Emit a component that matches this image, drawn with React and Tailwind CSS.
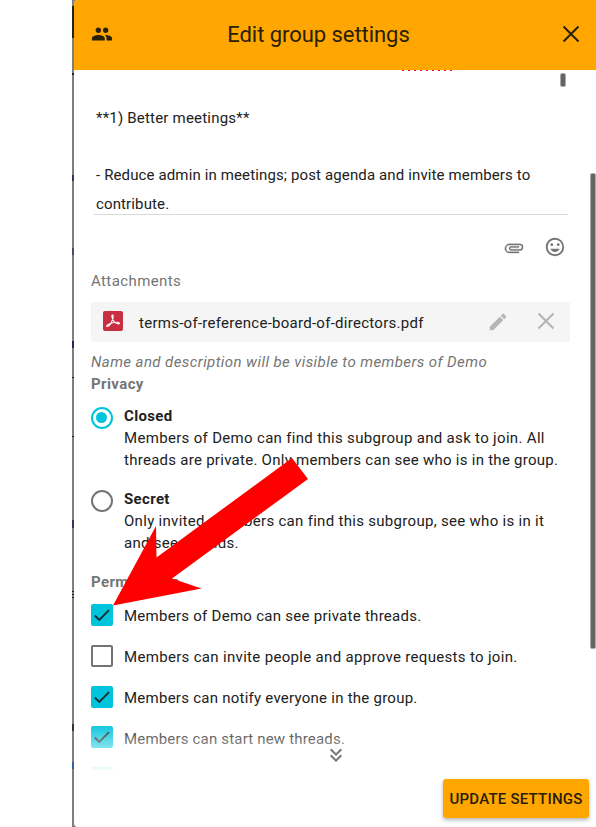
const ICONS = {
  people: "M16 11c1.66 0 2.99-1.34 2.99-3S17.66 5 16 5c-1.66 0-3 1.34-3 3s1.34 3 3 3zm-8 0c1.66 0 2.99-1.34 2.99-3S9.66 5 8 5C6.34 5 5 6.34 5 8s1.34 3 3 3zm0 2c-2.33 0-7 1.17-7 3.5V19h14v-2.5c0-2.33-4.67-3.5-7-3.5zm8 0c-.29 0-.62.02-.97.05 1.16.84 1.97 1.97 1.97 3.45V19h6v-2.5c0-2.33-4.67-3.5-7-3.5z",
  clip: "M16.5,6V17.5A4,4 0 0,1 12.5,21.5A4,4 0 0,1 8.5,17.5V5A2.5,2.5 0 0,1 11,2.5A2.5,2.5 0 0,1 13.5,5V15.5A1,1 0 0,1 12.5,16.5A1,1 0 0,1 11.5,15.5V6H10V15.5A2.5,2.5 0 0,0 12.5,18A2.5,2.5 0 0,0 15,15.5V5A4,4 0 0,0 11,1A4,4 0 0,0 7,5V17.5A5.5,5.5 0 0,0 12.5,23A5.5,5.5 0 0,0 18,17.5V6H16.5Z",
  smile: "M12,17.5C14.33,17.5 16.3,16.04 17.11,14H6.89C7.69,16.04 9.67,17.5 12,17.5M8.5,11A1.5,1.5 0 0,0 10,9.5A1.5,1.5 0 0,0 8.5,8A1.5,1.5 0 0,0 7,9.5A1.5,1.5 0 0,0 8.5,11M15.5,11A1.5,1.5 0 0,0 17,9.5A1.5,1.5 0 0,0 15.5,8A1.5,1.5 0 0,0 14,9.5A1.5,1.5 0 0,0 15.5,11M12,20A8,8 0 0,1 4,12A8,8 0 0,1 12,4A8,8 0 0,1 20,12A8,8 0 0,1 12,20M12,2C6.47,2 2,6.5 2,12A10,10 0 0,0 12,22A10,10 0 0,0 22,12A10,10 0 0,0 12,2Z",
  pencil: "M20.71,7.04C21.1,6.65 21.1,6 20.71,5.63L18.37,3.29C18,2.9 17.35,2.9 16.96,3.29L15.12,5.12L18.87,8.87M3,17.25V21H6.75L17.81,9.93L14.06,6.18L3,17.25Z",
  down: "M16.59,5.59L18,7L12,13L6,7L7.41,5.59L12,10.17L16.59,5.59M16.59,11.59L18,13L12,19L6,13L7.41,11.59L12,16.17L16.59,11.59Z",
};

function Icon({ name, className }) {
  return (
    <svg viewBox="0 0 24 24" fill="currentColor" className={className}>
      <path d={ICONS[name]} />
    </svg>
  );
}

function Cross({ className }) {
  return (
    <svg viewBox="0 0 24 24" fill="none" stroke="currentColor" strokeWidth="2" className={className}>
      <path d="M4.500 4.500 19.500 19.500M19.500 4.500 4.500 19.500" />
    </svg>
  );
}

function Check({ checked, label, raised, tracking = "tracking-[0.27px]" }) {
  return (
    <div className="flex h-[41px] items-start">
      <span
        className={
          "flex h-[22px] w-[22px] shrink-0 items-center justify-center rounded-[2px] " +
          (checked ? "bg-[#00c4dc] " : "border-2 border-[#757575] ") +
          (raised ? "-mt-px" : "")
        }
      >
        {checked && (
          <svg viewBox="0 0 22 22" className="h-[22px] w-[22px]" fill="none" stroke="#17302f" strokeWidth="1.9">
            <path d="M3.8 11.500 8.300 16 18 6.200" />
          </svg>
        )}
      </span>
      <span className={"ml-[11px] mt-px leading-[22px] " + tracking}>{label}</span>
    </div>
  );
}

function Radio({ selected, title, children }) {
  return (
    <div className="flex h-[83px] shrink-0 items-start">
      <span
        className={
          "mt-[2px] flex h-[22px] w-[22px] shrink-0 items-center justify-center rounded-full border-2 " +
          (selected ? "border-[#00c4dc]" : "border-[#757575]")
        }
      >
        {selected && <span className="mb-px mr-px h-[11px] w-[11px] rounded-full bg-[#00c4dc]" />}
      </span>
      <div className="ml-[11px] leading-[22px]">
        <div className="font-bold tracking-[0.35px]">{title}</div>
        {children}
      </div>
    </div>
  );
}

export default function App() {
  return (
    <div className="relative flex h-[827px] w-[596px] overflow-hidden whitespace-nowrap bg-white pl-[72px] font-['Roboto',sans-serif] text-[15px] text-[#212121]">
      <div className="relative flex w-[524px] bg-[#7f7f7f] pl-[2px]">
        <span className="absolute left-0 top-[6px] h-8 w-[2px] bg-[#222]" />
        <span className="absolute left-0 top-[73px] h-[2px] w-[2px] bg-[#222]" />
        <span className="absolute left-0 top-[175px] h-[6px] w-[2px] bg-[#34345f]" />
        <span className="absolute left-0 top-[248px] h-[7px] w-[2px] bg-[#4b4b60]" />
        <span className="absolute left-0 top-[341px] h-[7px] w-[2px] bg-[#26264f]" />
        <span className="absolute left-0 top-[377px] h-px w-[2px] bg-[#222]" />
        <span className="absolute left-0 top-[436px] h-px w-[2px] bg-[#222]" />
        <span className="absolute left-0 top-[520px] h-[8px] w-[2px] bg-[#34345f]" />
        <span className="absolute left-0 top-[591px] h-[8px] w-[2px] bg-[repeating-linear-gradient(180deg,#222_0_1px,#7f7f7f_1px_3px)]" />
        <span className="absolute left-0 top-[724px] h-[7px] w-[2px] bg-[#35304a]" />
        <span className="absolute left-0 top-[762px] h-[7px] w-[2px] bg-[#30619b]" />
        <main className="relative flex w-[522px] flex-col overflow-hidden rounded-l bg-white">
          <header className="flex h-[70px] shrink-0 items-center bg-[#ffa700] pl-[17px] pr-[13px] text-[#282009]">
            <Icon name="people" className="-mt-[2px] mr-px h-[22px] w-[22px]" />
            <h1 className="mr-9 flex-1 text-center text-[22px] leading-[70px] tracking-[-0.05px]">Edit group settings</h1>
            <Cross className="-mt-[2px] h-6 w-6" />
          </header>

          <div className="flex h-[700px] shrink-0 flex-col overflow-hidden pl-[17px] pr-[26px]">
            <section className="relative ml-[3px] mr-[2px] h-[145px] shrink-0 overflow-hidden border-b border-[#d9d9d9] pl-[2px] pt-[34px] leading-[28px] tracking-[0.13px]">
              <span className="absolute left-[308px] top-0 h-px w-[51px] bg-[repeating-linear-gradient(90deg,#f00_0_2px,transparent_2px_6px)]" />
              <span className="absolute right-[2px] top-[3px] h-[14px] w-[6px] rounded-[2px] border border-[#aaa9a8] bg-[#666461]" />
              <div className="tracking-[0.2px]">**1) Better meetings**</div>
              <div className="h-[29px]">&nbsp;</div>
              <div className="h-[29px]">- Reduce admin in meetings; post agenda and invite members to</div>
              <div>contribute.</div>
            </section>
            <div className="flex h-[55px] shrink-0 justify-end gap-[20px] pr-[4px] pt-[21px] text-[#757575]">
              <Icon name="clip" className="mt-[2px] h-5 w-5 rotate-90 stroke-current stroke-[0.4px]" />
              <Icon name="smile" className="h-[22px] w-[22px]" />
            </div>
            <div className="h-8 shrink-0 leading-[22px] tracking-[0.4px] text-[#757575]">Attachments</div>
            <div className="flex h-10 shrink-0 items-center rounded-[2px] bg-[#f5f5f5] pl-3 pr-[12px]">
              <svg viewBox="0 0 20 20" className="-mt-[2px] h-5 w-5" fill="none">
                <rect width="20" height="20" rx="2" fill="#c92f42" />
                <path d="M4 15.5C7 15.5 10.5 8 10.2 5.2 10 3.2 8.3 3.8 9 6.2 10 10 12.8 12.8 15.5 12.9 17.5 12.9 16.5 11.3 14 11.3 10.5 11.3 3.8 13.2 3.7 15.2Z" stroke="white" strokeWidth="1.1" />
              </svg>
              <span className="ml-4 mt-[2px] flex-1 tracking-[0.27px]">terms-of-reference-board-of-directors.pdf</span>
              <Icon name="pencil" className="mr-[25px] h-[22px] w-[22px] text-[#b5b5b5]" />
              <Cross className="-mt-[2px] h-6 w-6 text-[#b5b5b5]" />
            </div>
            <div className="mt-[9px] shrink-0 italic leading-[22px] tracking-[0.42px] text-[#757575]">
              Name and description will be visible to members of Demo
            </div>
            <div className="mb-[10px] shrink-0 font-bold leading-[22px] tracking-[0.4px] text-[#757575]">Privacy</div>
            <Radio selected title="Closed">
              <div className="tracking-[0.32px]">Members of Demo can find this subgroup and ask to join. All</div>
              <div className="tracking-[0.27px]">threads are private. Only members can see who is in the group.</div>
            </Radio>
            <Radio title="Secret">
              <div className="tracking-[0.3px]">Only invited members can find this subgroup, see who is in it</div>
              <div className="tracking-[0.27px]">and see threads.</div>
            </Radio>
            <div className="mb-[11px] shrink-0 font-bold leading-[22px] tracking-[0.4px] text-[#757575]">Permissions</div>
            <div className="shrink-0">
              <Check checked label="Members of Demo can see private threads." />
              <Check label="Members can invite people and approve requests to join." tracking="tracking-[0.32px]" />
              <Check checked label="Members can notify everyone in the group." tracking="tracking-[0.25px]" />
              <Check checked raised label="Members can start new threads." tracking="tracking-[0.18px]" />
              <Check checked raised label="" />
            </div>
          </div>

          <footer className="flex flex-1 items-start justify-end pr-[7px] pt-[9px]">
            <button className="h-[39px] w-[146px] rounded-[3px] bg-[#ffa700] pt-px text-[15px] font-medium tracking-[0.23px] text-[#282009] shadow-[0_2px_4px_rgba(0,0,0,0.3)]">
              UPDATE SETTINGS
            </button>
          </footer>

          <div className="absolute left-0 top-[722px] flex h-[50px] w-full items-end justify-center bg-linear-to-b from-white/0 to-white pb-[5px] pl-[2px]">
            <Icon name="down" className="h-6 w-6 text-[#757575]" />
          </div>
          <span className="absolute right-0 top-[173px] h-[476px] w-[6px] rounded-[2px] border border-[#aaa9a8] bg-[#666461]" />
        </main>
      </div>

      <svg viewBox="0 0 596 827" className="pointer-events-none absolute inset-0 h-full w-full">
        <path d="M113 605.5 156 526 156.500 557.500 292 458 308 479 172 578.500 201.500 588.500Z" fill="#f00" />
      </svg>
    </div>
  );
}
